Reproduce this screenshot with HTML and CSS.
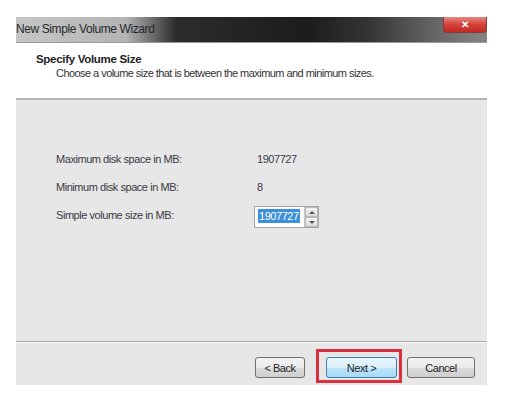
FILE: index.html
```html
<!DOCTYPE html>
<html lang="en">
<head>
    <meta charset="UTF-8">
    <meta name="viewport" content="width=device-width, initial-scale=1.0">
    <title>New Simple Volume Wizard</title>
    <link rel="stylesheet" href="styles.css">
</head>
<body>
    <div class="wizard">
        <div class="titlebar">
            <span class="title">New Simple Volume Wizard</span>
            <span class="close">&#x2715;</span>
        </div>
        <div class="header">
            <h1>Specify Volume Size</h1>
            <p>Choose a volume size that is between the maximum and minimum sizes.</p>
        </div>
        <div class="content">
            <div class="rows">
                <div class="label">Maximum disk space in MB:</div>
                <div class="value">1907727</div>
                <div class="label">Minimum disk space in MB:</div>
                <div class="value">8</div>
                <div class="label">Simple volume size in MB:</div>
                <div class="spinner">
                    <div class="spin-field"><span class="selected">1907727</span></div>
                    <div class="spin-buttons">
                        <span class="spin-up"></span>
                        <span class="spin-down"></span>
                    </div>
                </div>
            </div>
        </div>
        <div class="footer">
            <button class="btn btn-back" type="button">&lt; Back</button>
            <div class="highlight">
                <button class="btn btn-next" type="button">Next &gt;</button>
            </div>
            <button class="btn btn-cancel" type="button">Cancel</button>
        </div>
    </div>
</body>
</html>
```

FILE: styles.css
```css
body {
    margin: 0;
    background-color: #ffffff;
    font-family: "Liberation Sans", Arial, sans-serif;
    font-size: 11px;
    letter-spacing: -0.45px;
    color: #333;
}
.wizard {
    width: 471px;
    margin: 17px 0 0 16px;
}
.titlebar {
    height: 26px;
    display: flex;
    justify-content: space-between;
    align-items: flex-start;
    background: linear-gradient(to right, #c6c6c6 0, #b4b4b4 110px, #2c2c2c 160px, #1c1c1c 290px, #333 350px, #6e6e6e 430px, #858585 471px);
    border-bottom: 1px solid #9a9a9a;
    box-sizing: border-box;
}
.title {
    font-size: 12px;
    letter-spacing: -0.4px;
    color: #1e2a2a;
    line-height: 25px;
}
.close {
    width: 44px;
    height: 16px;
    background: linear-gradient(#e8877e, #d2423a 50%, #c42a22);
    border: 1px solid #8a3a36;
    border-top: none;
    border-radius: 0 0 4px 4px;
    color: #fff;
    font-size: 10px;
    font-weight: bold;
    letter-spacing: 0;
    text-align: center;
    line-height: 15px;
    box-sizing: border-box;
}
.header {
    height: 57px;
    background-color: #fff;
    padding: 9px 0 0 20px;
    box-sizing: border-box;
    border-bottom: 2px solid #b4b4b4;
}
h1 {
    margin: 0;
    font-size: 11.5px;
    font-weight: bold;
    letter-spacing: -0.3px;
    color: #222;
    line-height: 14px;
}
.header p {
    margin: 0 0 0 20px;
    line-height: 14px;
    letter-spacing: -0.55px;
    color: #333;
}
.content {
    height: 242px;
    background-color: #e7e7e7;
    padding: 52px 0 0 40px;
    box-sizing: border-box;
    border-bottom: 1px solid #a9a9a9;
}
.rows {
    display: grid;
    grid-template-columns: 201px auto;
    grid-auto-rows: 28px;
    align-items: start;
}
.label, .value {
    line-height: 14px;
    color: #3a3a44;
}
.spinner {
    display: flex;
    width: 65px;
    height: 22px;
    margin: -2px 0 0 -3px;
    border: 1px solid #a4a4a4;
    background-color: #fff;
    box-sizing: border-box;
}
.spin-field {
    flex: 1;
    padding: 2px 0 0 3px;
}
.selected {
    display: inline-block;
    background-color: #3b8fdc;
    color: #fff;
    line-height: 14px;
    padding: 0 1px;
}
.spin-buttons {
    width: 13px;
    display: flex;
    flex-direction: column;
    border-left: 1px solid #c8c8c8;
}
.spin-up, .spin-down {
    flex: 1;
    background: linear-gradient(#f4f4f4, #dcdcdc);
    border: 1px solid #b9b9b9;
    position: relative;
}
.spin-up::after, .spin-down::after {
    content: "";
    position: absolute;
    left: 3px;
    top: 3px;
    border-left: 3px solid transparent;
    border-right: 3px solid transparent;
}
.spin-up::after {
    border-bottom: 3px solid #555;
}
.spin-down::after {
    border-top: 3px solid #555;
}
.footer {
    height: 43px;
    background-color: #e7e7e7;
    border-top: 1px solid #fafafa;
    display: flex;
    align-items: flex-start;
    padding: 14px 0 0 239px;
    box-sizing: border-box;
}
.btn {
    height: 21px;
    font-family: "Liberation Sans", Arial, sans-serif;
    font-size: 11px;
    letter-spacing: -0.45px;
    color: #222;
    border: 1px solid #707070;
    border-radius: 3px;
    background: linear-gradient(#f3f3f3, #ebebeb 50%, #dddddd 51%, #cfcfcf);
    padding: 0;
}
.btn-back {
    width: 50px;
}
.highlight {
    position: relative;
    margin-left: 21px;
}
.highlight::before {
    content: "";
    position: absolute;
    left: -10px;
    top: -8px;
    right: -5px;
    bottom: -5px;
    border: 3px solid #d8303e;
}
.btn-next {
    width: 71px;
    border-color: #3c7fb1;
    background: linear-gradient(#eaf6fd, #d9f0fc 50%, #bee6fd 51%, #a7d9f5);
}
.btn-cancel {
    width: 68px;
    margin-left: 10px;
}
```
